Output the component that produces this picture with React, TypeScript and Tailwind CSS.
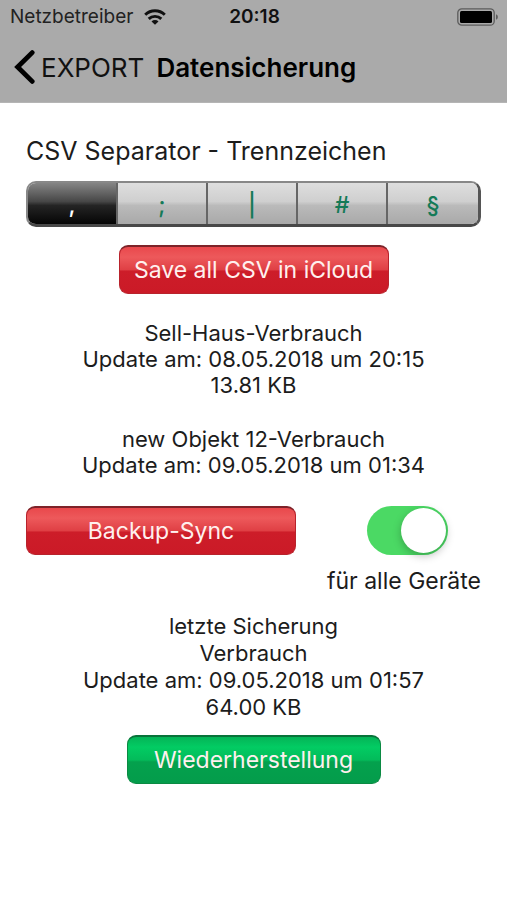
import React, { useState } from 'react';
import clsx from 'clsx';

const separators = [',', ';', '|', '#', '§'];

const WifiIcon = () => (
  <svg viewBox="0 0 22 16" className="h-4 w-[22px]" fill="none" stroke="#111" strokeWidth="2.9">
    <path d="M1.2 5.8a14 14 0 0 1 19.6 0" />
    <path d="M4.7 9.9a9 9 0 0 1 12.6 0" />
    <path d="M11 15.8 7.5 12.5a5 5 0 0 1 7 0Z" fill="#111" stroke="none" />
  </svg>
);

const BatteryIcon = () => (
  <svg viewBox="0 0 42 18" className="h-[18px] w-[42px]">
    <rect x="0.8" y="0.8" width="36.4" height="16.4" rx="4" fill="none" stroke="#5c5c5c" strokeWidth="1.3" />
    <rect x="3" y="3" width="32" height="12" rx="1.5" fill="#000" />
    <path d="M39 6.2a3 3 0 0 1 0 5.6Z" fill="#5c5c5c" />
  </svg>
);

const StatusBar = () => (
  <div className="grid h-[34px] grid-cols-[1fr_auto_1fr] items-center pr-2 pl-[10px] text-[19px] text-[#222]">
    <div className="flex items-center gap-[11px]">
      <span>Netzbetreiber</span>
      <WifiIcon />
    </div>
    <span className="font-semibold text-[#111]">20:18</span>
    <div className="flex justify-end">
      <BatteryIcon />
    </div>
  </div>
);

const NavBar = () => (
  <nav className="flex h-[66px] items-center gap-3 pl-[14px] text-[26px]">
    <button className="flex items-center gap-[6px] text-[#111]">
      <svg viewBox="0 0 21 34" className="h-[34px] w-[21px]" fill="none" stroke="#000" strokeWidth="4.8">
        <path d="M18.2 2.6 3.6 17l14.6 14.4" strokeLinecap="round" strokeLinejoin="miter" />
      </svg>
      EXPORT
    </button>
    <h1 className="font-semibold text-black">Datensicherung</h1>
  </nav>
);

const buttonColors = {
  red:
    'border-[#b8232c] border-t-[#7d2329] bg-[linear-gradient(#e9484c,#ed595b_22%,#df3f44_50%,#cd1d29_52%,#cb1a27)]',
  green:
    'border-[#0b8a43] border-t-[#08733a] bg-[linear-gradient(#04b457,#02cc63_22%,#03bb5a_50%,#04a14d_54%,#049c4b)]',
};

type GlossyButtonProps = {
  color: keyof typeof buttonColors;
  className?: string;
  children: React.ReactNode;
};

const GlossyButton = ({ color, className, children }: GlossyButtonProps) => (
  <button
    className={clsx(
      'h-[49px] rounded-[9px] border border-t-2 text-[23px] text-[#fff0ee]',
      buttonColors[color],
      className,
    )}
  >
    {children}
  </button>
);

const App = () => {
  const [separator, setSeparator] = useState(',');
  const [allDevices, setAllDevices] = useState(true);

  return (
    <div className="min-h-screen bg-white font-['Inter',sans-serif] text-[#1c1c1c]">
      <header className="border-b border-[#b5b5b5] bg-[#aaa] pb-[2px]">
        <StatusBar />
        <NavBar />
      </header>

      <main className="flex flex-col items-center px-[26px] pt-[30px]">
        <fieldset className="w-full">
          <legend className="mb-3 text-[25px] leading-9">CSV Separator - Trennzeichen</legend>
          <div className="grid h-[46px] grid-cols-5 divide-x-2 divide-[#666] overflow-hidden rounded-[10px] border-2 border-r-[3px] border-b-[3px] border-[#888] border-r-[#555] border-b-[#484848]">
            {separators.map((s) => (
              <label
                key={s}
                className={clsx(
                  'flex items-center justify-center pt-1 text-[23px] font-medium',
                  s === separator
                    ? 'bg-[linear-gradient(#858585,#474747_45%,#242424_55%,#050505)] text-white'
                    : 'bg-[linear-gradient(#dedede,#cfcfcf_45%,#bababa_55%,#a9a9a9)] text-[#157a57]',
                )}
              >
                <input
                  type="radio"
                  name="separator"
                  className="sr-only"
                  checked={s === separator}
                  onChange={() => setSeparator(s)}
                />
                {s}
              </label>
            ))}
          </div>
        </fieldset>

        <GlossyButton color="red" className="mt-[18px] w-[270px]">
          Save all CSV in iCloud
        </GlossyButton>

        <div className="mt-[26px] text-center text-[22px] leading-[26px]">
          <p>Sell-Haus-Verbrauch</p>
          <p>Update am: 08.05.2018 um 20:15</p>
          <p>13.81 KB</p>
          <p className="mt-7">new Objekt 12-Verbrauch</p>
          <p>Update am: 09.05.2018 um 01:34</p>
        </div>

        <div className="mt-7 flex w-full items-start justify-between">
          <GlossyButton color="red" className="w-[270px]">
            Backup-Sync
          </GlossyButton>
          <label className="flex flex-col items-center gap-3 text-[23px] leading-7">
            <input
              type="checkbox"
              role="switch"
              checked={allDevices}
              onChange={(e) => setAllDevices(e.target.checked)}
              className="ml-2 flex h-[49px] w-[81px] appearance-none rounded-full bg-[#d5d5d5] p-[2px] before:size-[45px] before:rounded-full before:bg-white before:shadow-[0_3px_8px_rgba(0,0,0,0.25)] checked:justify-end checked:bg-[#4bd964]"
            />
            für alle Geräte
          </label>
        </div>

        <div className="mt-[18px] text-center text-[22px] leading-[27px]">
          <p>letzte Sicherung</p>
          <p>Verbrauch</p>
          <p>Update am: 09.05.2018 um 01:57</p>
          <p>64.00 KB</p>
        </div>

        <GlossyButton color="green" className="mt-[14px] w-[254px]">
          Wiederherstellung
        </GlossyButton>
      </main>
    </div>
  );
};

export default App;
